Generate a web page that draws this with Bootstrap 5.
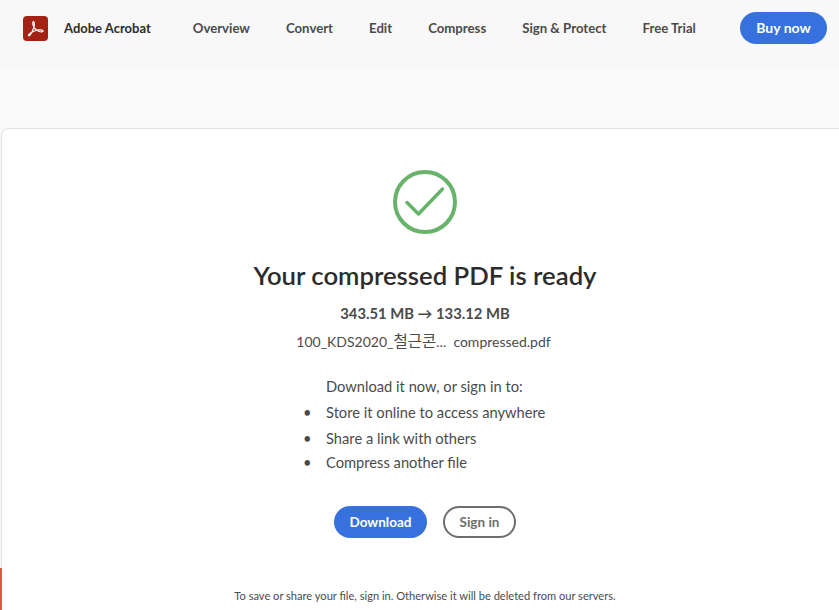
<!DOCTYPE html>
<html lang="en">
<head>
    <meta charset="UTF-8">
    <meta name="viewport" content="width=device-width, initial-scale=1.0">
    <title>Adobe Acrobat</title>
    <link href="https://cdn.jsdelivr.net/npm/bootstrap@5.3.0/dist/css/bootstrap.min.css" rel="stylesheet">
    <style>
        html, body { height: 610px; overflow: hidden; }
        body {
            background: #fafafa;
            font-family: "Lato", "Noto Sans CJK KR", sans-serif;
            color: #4b4b4b;
            position: relative;
        }
        .top-bar { height: 68px; background: #f8f8f8; padding: 0 12px 12px 23px; }
        .app-logo { width: 25px; height: 25px; }
        .app-name { margin: 2px 42px 0 16px; font-size: 13px; font-weight: 700; color: #2c2c2c; white-space: nowrap; }
        .top-link { font-size: 13.2px; font-weight: 700; color: #4b4b4b; text-decoration: none; white-space: nowrap; }
        .top-links { gap: 36px; margin-top: 2px; }
        .pill-btn { border-radius: 16px; height: 32px; font-size: 13.5px; font-weight: 700; padding: 0; display: inline-flex; align-items: center; justify-content: center; }
        .pill-blue { background: #3671de; color: #fff; border: 0; }
        .pill-blue:hover { background: #2c62c7; color: #fff; }
        .pill-line { background: #fff; color: #6e6e6e; border: 2px solid #6e6e6e; }
        .buy-btn { width: 87px; margin-left: auto; flex-shrink: 0; font-size: 14px; padding-bottom: 2px; }
        .result-panel {
            margin: 60px -10px 0 1px;
            height: 500px;
            background: #fff;
            border: 1px solid #e1e1e1;
            border-radius: 8px;
            padding-top: 41px;
        }
        .done-icon { width: 64px; height: 64px; display: block; }
        .result-title { font-size: 25.7px; font-weight: 600; color: #2c2c2c; margin: 23px 0 0; line-height: 36px; }
        .size-line { font-size: 14.8px; font-weight: 700; margin: 8px 0 0; line-height: 24px; }
        .file-line { font-size: 14px; margin: 6px 0 0; height: 21px; line-height: 20px; padding-right: 3px; }
        .file-line span { font-size: 15.500px; }
        .perks { width: fit-content; margin: 22px auto 0 305px; font-size: 14.7px; }
        .perks p { margin: 0 0 0 19px; line-height: 24px; }
        .perks ul { margin: 2px 0 0; padding: 0 0 0 19px; line-height: 24px; list-style: none; }
        .perks li { position: relative; }
        .perks li::before { content: "•"; position: absolute; left: -23px; }
        .perks li + li { margin-top: 2px; }
        .perks li:last-child { margin-top: 0; }
        .action-row { margin-top: 32px; gap: 16px; }
        .dl-btn { width: 93px; }
        .signin-btn { width: 73px; }
        .save-note { font-size: 11.1px; margin: 49px 0 0; line-height: 18px; }
        .red-strip { position: absolute; left: 0; top: 568px; width: 2px; height: 42px; background: #e2544c; }
    </style>
</head>
<body>
    <header class="top-bar d-flex align-items-center">
        <svg class="app-logo flex-shrink-0" viewBox="0 0 25 25">
            <rect width="25" height="25" rx="4" fill="#a42213"/>
            <path d="M5.500 19.500c1.400 1 3.900-3.700 5.200-7.700.7-2.200 1.100-6-.2-6.100-1.300 0-.9 3.700 1 6.400 1.700 2.400 6.400 4.700 8.300 3.500 1-.8-.5-2-3.800-1.700-3.800.3-10.400 3.200-10.500 5.600z" fill="none" stroke="#fff" stroke-width="1.200" stroke-linejoin="round"/>
        </svg>
        <span class="app-name">Adobe Acrobat</span>
        <nav class="top-links d-flex">
            <a class="top-link" href="#">Overview</a>
            <a class="top-link" href="#">Convert</a>
            <a class="top-link" href="#">Edit</a>
            <a class="top-link" href="#">Compress</a>
            <a class="top-link" href="#">Sign &amp; Protect</a>
            <a class="top-link" href="#">Free Trial</a>
        </nav>
        <a class="btn pill-btn pill-blue buy-btn" href="#">Buy now</a>
    </header>

    <main class="result-panel text-center">
        <svg class="done-icon mx-auto" viewBox="0 0 64 64">
            <circle cx="32" cy="32" r="30" fill="none" stroke="#68b36b" stroke-width="4"/>
            <path d="M14 32.500 L25.500 44 L49.500 19" fill="none" stroke="#68b36b" stroke-width="3.500" stroke-linecap="round" stroke-linejoin="round"/>
        </svg>
        <h1 class="result-title">Your compressed PDF is ready</h1>
        <p class="size-line">343.51 MB → 133.12 MB</p>
        <p class="file-line">100_KDS2020_<span>철근콘</span>...&nbsp; compressed.pdf</p>
        <div class="perks text-start">
            <p>Download it now, or sign in to:</p>
            <ul>
                <li>Store it online to access anywhere</li>
                <li>Share a link with others</li>
                <li>Compress another file</li>
            </ul>
        </div>
        <div class="action-row d-flex justify-content-center">
            <a class="btn pill-btn pill-blue dl-btn" href="#">Download</a>
            <a class="btn pill-btn pill-line signin-btn" href="#">Sign in</a>
        </div>
        <p class="save-note">To save or share your file, sign in. Otherwise it will be deleted from our servers.</p>
    </main>
    <div class="red-strip"></div>

    <script src="https://cdn.jsdelivr.net/npm/bootstrap@5.3.0/dist/js/bootstrap.bundle.min.js"></script>
</body>
</html>
